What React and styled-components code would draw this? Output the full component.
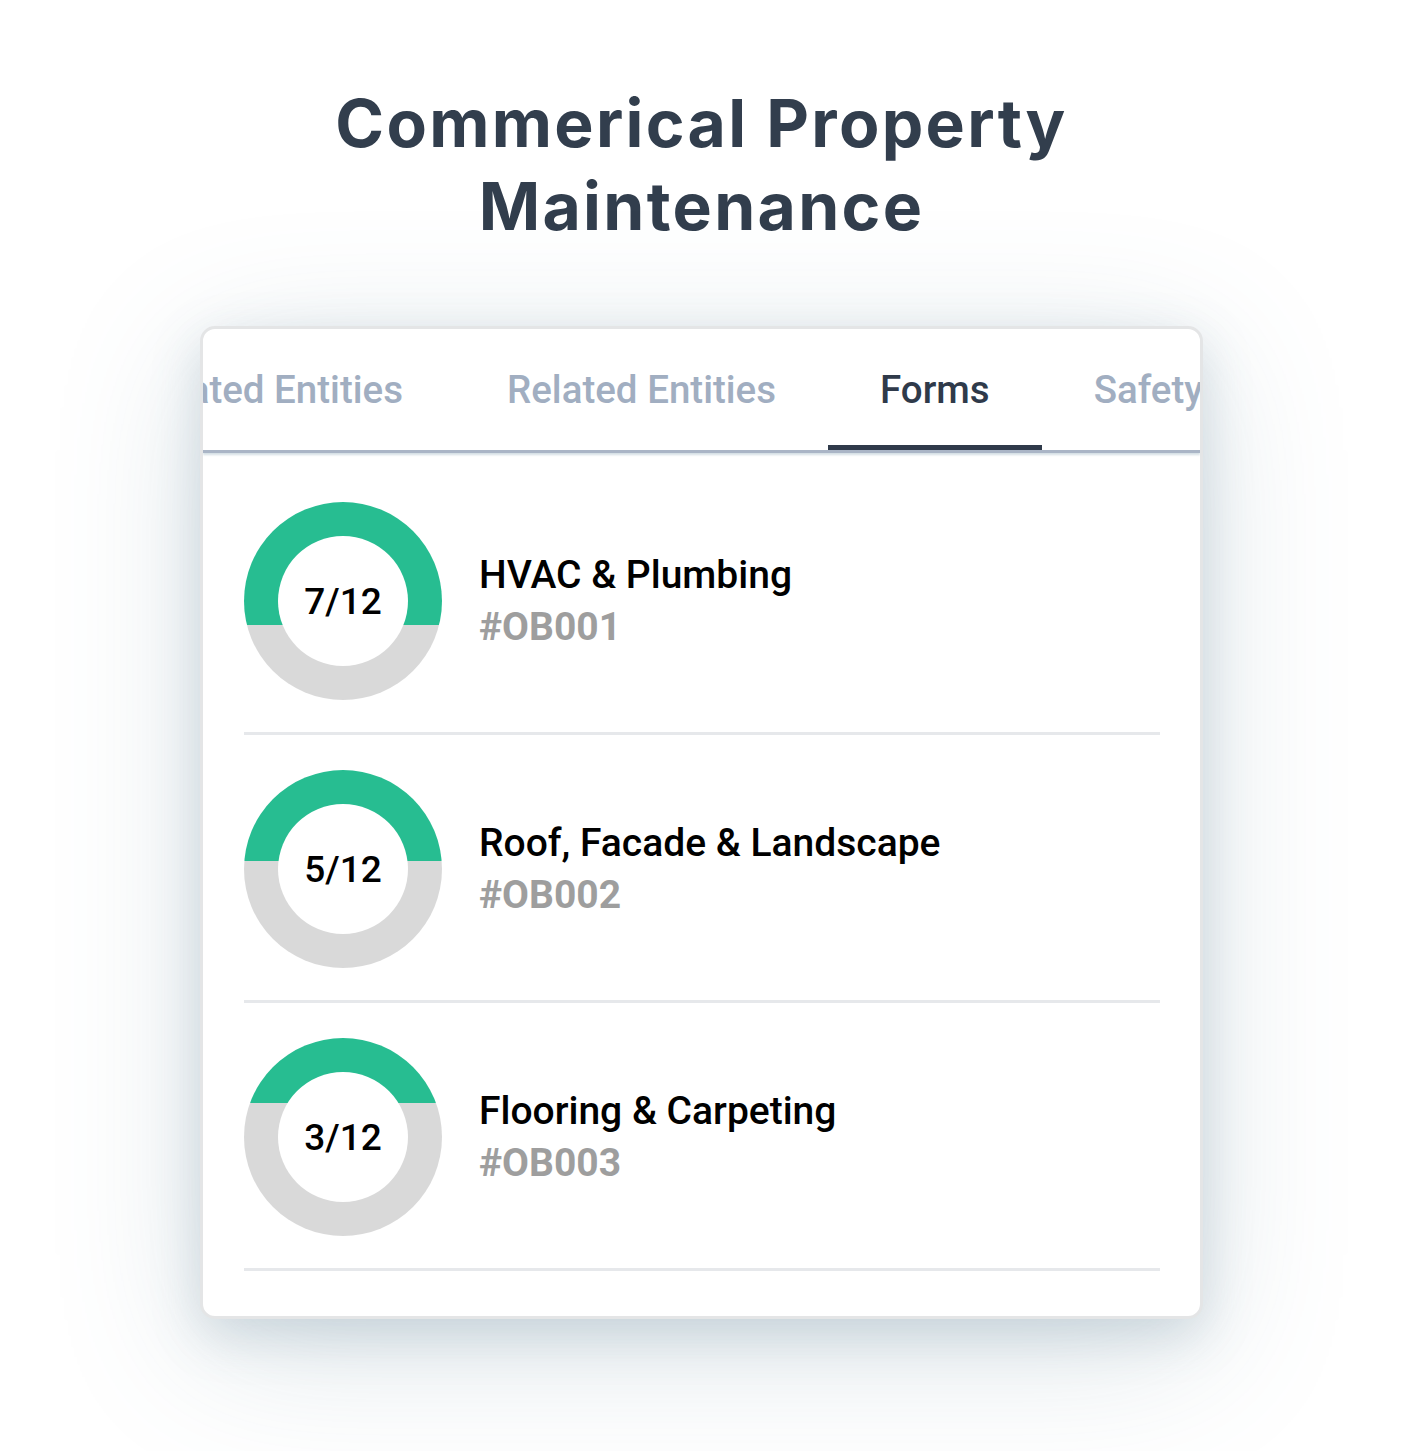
import React from "react";
import styled, { createGlobalStyle } from "styled-components";

const GlobalStyle = createGlobalStyle`
  html, body {
    margin: 0;
    padding: 0;
    background: #ffffff;
  }
  body {
    font-family: Roboto, "Liberation Sans", sans-serif;
  }
`;

const Page = styled.div`
  width: 1403px;
  height: 1451px;
  overflow: hidden;
  display: flex;
  flex-direction: column;
  align-items: center;
  background: #ffffff;
`;

const Title = styled.h1`
  margin: 82px 0 0;
  font-family: Inter, "Open Sans", sans-serif;
  font-weight: 700;
  font-size: 66px;
  line-height: 83px;
  letter-spacing: 2.3px;
  color: #323e4d;
  text-align: center;
`;

const Card = styled.div`
  margin-top: 78px;
  width: 1003px;
  height: 993px;
  box-sizing: border-box;
  border: 3px solid #e4e5e6;
  border-radius: 15px;
  background: #ffffff;
  overflow: hidden;
  box-shadow: 0 16px 50px rgba(80, 120, 140, 0.22),
    0 30px 150px rgba(80, 120, 140, 0.2);
  display: flex;
  flex-direction: column;
`;

const TabBar = styled.div`
  display: flex;
  height: 121px;
  flex-shrink: 0;
  border-bottom: 3px solid #aab5c6;
  box-shadow: 0 2px 2px rgba(160, 185, 195, 0.45);
  white-space: nowrap;
`;

const ClippedTab = styled.div`
  width: 252px;
  flex-shrink: 0;
  display: flex;
  justify-content: flex-end;
  overflow: hidden;
`;

const Tab = styled.div`
  flex-shrink: 0;
  box-sizing: border-box;
  height: 121px;
  padding: 4px 52px 0;
  display: flex;
  align-items: center;
  font-size: 38.5px;
  font-weight: 500;
  color: ${(p) => (p.$active ? "#2f3a4a" : "#a1aec1")};
  border-bottom: 5px solid ${(p) => (p.$active ? "#2f3a4a" : "transparent")};
  margin-bottom: -3px;
`;

const List = styled.div`
  display: flex;
  flex-direction: column;
  padding: 14px 40px 0 41px;
`;

const Row = styled.div`
  display: flex;
  align-items: center;
  gap: 37px;
  padding: 35px 0 32px;
  border-bottom: 3px solid #e6e8eb;
`;

const Ring = styled.div`
  width: 198px;
  height: 198px;
  flex-shrink: 0;
  border-radius: 50%;
  background: linear-gradient(
    to bottom,
    #27bd91 0,
    #27bd91 ${(p) => p.$level}%,
    #d9d9d9 ${(p) => p.$level}%,
    #d9d9d9 100%
  );
  display: flex;
  align-items: center;
  justify-content: center;
`;

const RingHole = styled.div`
  width: 130px;
  height: 130px;
  border-radius: 50%;
  background: #ffffff;
  display: flex;
  align-items: center;
  justify-content: center;
  font-size: 37px;
  font-weight: 500;
  color: #000000;
`;

const Info = styled.div`
  display: flex;
  flex-direction: column;
`;

const Name = styled.div`
  font-size: 39px;
  font-weight: 500;
  line-height: 52px;
  color: #000000;
`;

const Code = styled.div`
  font-size: 39px;
  font-weight: 700;
  line-height: 52px;
  color: #9e9e9e;
`;

const forms = [
  { done: "7/12", level: 62, name: "HVAC & Plumbing", code: "#OB001" },
  { done: "5/12", level: 46, name: "Roof, Facade & Landscape", code: "#OB002" },
  { done: "3/12", level: 33, name: "Flooring & Carpeting", code: "#OB003" },
];

export default function App() {
  return (
    <Page>
      <GlobalStyle />
      <Title>
        Commerical Property
        <br />
        Maintenance
      </Title>
      <Card>
        <TabBar>
          <ClippedTab>
            <Tab>Associated Entities</Tab>
          </ClippedTab>
          <Tab>Related Entities</Tab>
          <Tab $active>Forms</Tab>
          <Tab>Safety</Tab>
        </TabBar>
        <List>
          {forms.map((f) => (
            <Row key={f.code}>
              <Ring $level={f.level}>
                <RingHole>{f.done}</RingHole>
              </Ring>
              <Info>
                <Name>{f.name}</Name>
                <Code>{f.code}</Code>
              </Info>
            </Row>
          ))}
        </List>
      </Card>
    </Page>
  );
}
